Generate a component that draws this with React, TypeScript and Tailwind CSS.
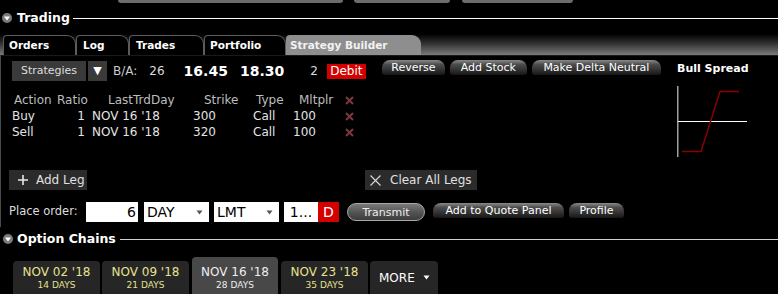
import React from "react";

const gloss =
  "flex items-center justify-center h-[15px] rounded-t-[8px] rounded-b-[3px] bg-[linear-gradient(180deg,#8a8a8a_0%,#4c4c4c_30%,#2e2e2e_70%,#161616_100%)] text-[11px] leading-none text-white";

function SectionIcon() {
  return (
    <div className="w-[10px] h-[10px] rounded-full bg-[#7a7a7a] flex items-center justify-center">
      <svg width="6" height="5" viewBox="0 0 6 5">
        <path d="M0 0.5 L6 0.5 L3 4.5 Z" fill="#fff" />
      </svg>
    </div>
  );
}

function XMark() {
  return (
    <svg width="9" height="9" viewBox="0 0 9 9">
      <path d="M1 1 L8 8 M8 1 L1 8" stroke="#7e3a3a" strokeWidth="2" />
    </svg>
  );
}

function Caret() {
  return (
    <svg width="7" height="5" viewBox="0 0 7 5">
      <path d="M0.5 0.5 L6.5 0.5 L3.5 4.5 Z" fill="#555" />
    </svg>
  );
}

const tabs = [
  { label: "Orders", w: "w-[73px]", ml: "ml-[3px]", pl: "pl-[5px]" },
  { label: "Log", w: "w-[53px]", ml: "ml-0", pl: "pl-[6px]" },
  { label: "Trades", w: "w-[75px]", ml: "ml-0", pl: "pl-[6px]" },
  { label: "Portfolio", w: "w-[82px]", ml: "ml-0", pl: "pl-[5px]" },
];

const legs = [
  { action: "Buy", strike: "300" },
  { action: "Sell", strike: "320" },
];

const dates = [
  { d: "NOV 02 '18", n: "14 DAYS", w: "w-[87px]", ml: "ml-[13px]", sel: false },
  { d: "NOV 09 '18", n: "21 DAYS", w: "w-[87px]", ml: "ml-[2px]", sel: false },
  { d: "NOV 16 '18", n: "28 DAYS", w: "w-[86px]", ml: "ml-[3px]", sel: true },
  { d: "NOV 23 '18", n: "35 DAYS", w: "w-[87px]", ml: "ml-[3px]", sel: false },
];

export default function App() {
  return (
    <div className="w-[778px] h-[294px] bg-black overflow-hidden font-['DejaVu_Sans',sans-serif] text-[#dddddd]">
      {/* top bars (cut-off buttons) */}
      <div className="flex h-[3px]">
        <div className="ml-[118px] w-[225px] bg-[#6c6c6c] rounded-b-[3px]" />
        <div className="ml-[11px] w-[96px] bg-[#6c6c6c] rounded-b-[3px]" />
        <div className="ml-[12px] w-[111px] bg-[#6c6c6c] rounded-b-[3px]" />
      </div>

      {/* Trading header */}
      <div className="mt-[5px] h-[20px] flex items-center">
        <div className="ml-[2px]">
          <SectionIcon />
        </div>
        <div className="ml-[5px] text-[12.5px] font-bold text-white leading-none">Trading</div>
        <div className="ml-[3px] flex-1 h-px bg-white" />
      </div>

      {/* tab strip */}
      <div className="h-[27px] flex items-end bg-[linear-gradient(180deg,#000_0%,#000_22%,#2e2e2e_55%,#7a7a7a_100%)]">
        {tabs.map((t) => (
          <div
            key={t.label}
            className={`${t.w} ${t.ml} ${t.pl} h-[20px] bg-black border-t border-l border-r border-[#5c5c5c] rounded-tl-[4px] rounded-tr-[9px] flex items-center text-[10.5px] font-bold text-white leading-none`}
          >
            {t.label}
          </div>
        ))}
        <div className="w-[135px] pl-[4px] h-[20px] bg-[#8e8e8e] rounded-tl-[4px] rounded-tr-[9px] flex items-center text-[10.5px] font-bold text-[#f2f2f2] leading-none">
          Strategy Builder
        </div>
      </div>

      {/* strategy panel */}
      <div className="flex h-[172px] border-l border-[#4a4a4a] border-t border-t-[#1a1a1a]">
        <div className="w-[676px] flex flex-col">
          {/* row 1 */}
          <div className="mt-[5px] h-[20px] flex items-center">
            <div className="ml-[11px] w-[74px] h-[20px] bg-[#3a3a3a] flex items-center justify-center text-[11px] text-[#dddddd]">
              Strategies
            </div>
            <div className="ml-[2px] w-[19px] h-[20px] bg-[#3a3a3a] flex items-center justify-center text-[11px] text-white">
              ▼
            </div>
            <div className="ml-[6px] text-[12px] text-[#cccccc]">B/A:</div>
            <div className="ml-[12px] text-[12px] text-[#dddddd]">26</div>
            <div className="ml-[19px] text-[14px] font-bold text-white">16.45</div>
            <div className="ml-[12px] text-[14px] font-bold text-white">18.30</div>
            <div className="ml-[26px] text-[12px] text-[#dddddd]">2</div>
            <div className="ml-[9px] w-[39px] h-[15px] bg-[#d40000] flex items-center justify-center text-[12px] text-white leading-none">
              Debit
            </div>
            <div className={`${gloss} ml-[16px] w-[63px] self-start mt-[-1px]`}>Reverse</div>
            <div className={`${gloss} ml-[5px] w-[77px] self-start mt-[-1px]`}>Add Stock</div>
            <div className={`${gloss} ml-[5px] w-[129px] self-start mt-[-1px]`}>Make Delta Neutral</div>
          </div>

          {/* legs table */}
          <div className="mt-[11px] flex flex-col text-[12px] leading-[16px]">
            <div className="flex h-[16px] text-[#bdbdbd]">
              <div className="ml-[11px] w-[43px] pl-[2px]">Action</div>
              <div className="w-[35px] pl-[2px]">Ratio</div>
              <div className="w-[100px] pl-[18px]">LastTrdDay</div>
              <div className="w-[60px] pl-[14px]">Strike</div>
              <div className="w-[40px] pl-[6px]">Type</div>
              <div className="w-[50px] pl-[9px]">Mltplr</div>
              <div className="w-[20px] pl-[5px] flex items-center">
                <XMark />
              </div>
            </div>
            {legs.map((l) => (
              <div key={l.action} className="flex h-[16px] text-[#e4e4e4]">
                <div className="ml-[11px] w-[43px]">{l.action}</div>
                <div className="w-[35px] pr-[5px] text-right">1</div>
                <div className="w-[100px] pl-[2px]">NOV 16 '18</div>
                <div className="w-[60px] pl-[3px]">{l.strike}</div>
                <div className="w-[40px] pl-[3px]">Call</div>
                <div className="w-[50px] pl-[3px]">100</div>
                <div className="w-[20px] pl-[5px] flex items-center">
                  <XMark />
                </div>
              </div>
            ))}
          </div>

          {/* add leg / clear */}
          <div className="mt-[30px] h-[20px] flex items-center">
            <div className="ml-[8px] w-[78px] h-[20px] bg-[#2b2b2b] flex items-center text-[12px] text-[#e0e0e0]">
              <svg className="ml-[9px]" width="10" height="10" viewBox="0 0 10 10">
                <path d="M5 0 V10 M0 5 H10" stroke="#e8e8e8" strokeWidth="1.6" />
              </svg>
              <span className="ml-[8px]">Add Leg</span>
            </div>
            <div className="ml-[278px] w-[112px] h-[20px] bg-[#2b2b2b] flex items-center text-[12px] text-[#e0e0e0]">
              <svg className="ml-[5px]" width="11" height="11" viewBox="0 0 11 11">
                <path d="M0.5 0.5 L10.5 10.5 M10.5 0.5 L0.5 10.5" stroke="#d8d8d8" strokeWidth="1.1" />
              </svg>
              <span className="ml-[9px]">Clear All Legs</span>
            </div>
          </div>

          {/* place order */}
          <div className="mt-[12px] h-[20px] flex items-center">
            <div className="ml-[8px] w-[77px] text-[11.5px] text-[#dddddd]">Place order:</div>
            <div className="w-[52px] h-[20px] bg-white text-black text-[14px] flex items-center justify-end pr-[2px]">6</div>
            <div className="ml-[6px] w-[65px] h-[20px] bg-white text-black text-[14px] flex items-center justify-between pl-[3px] pr-[6px]">
              <span>DAY</span>
              <Caret />
            </div>
            <div className="ml-[5px] w-[65px] h-[20px] bg-white text-black text-[14px] flex items-center justify-between pl-[3px] pr-[6px]">
              <span>LMT</span>
              <Caret />
            </div>
            <div className="ml-[5px] w-[34px] h-[20px] bg-white text-black text-[14px] flex items-center justify-center">1...</div>
            <div className="w-[21px] h-[20px] bg-[#d40000] text-white text-[14px] flex items-center justify-center">D</div>
            <div className="ml-[8px] w-[78px] h-[18px] rounded-full border border-[#a8a8a8] bg-[linear-gradient(180deg,#7a7a7a_0%,#555_50%,#3c3c3c_100%)] flex items-center justify-center text-[11px] text-[#eeeeee] leading-none">
              Transmit
            </div>
            <div className={`${gloss} ml-[8px] w-[131px] self-start mt-[1px]`}>Add to Quote Panel</div>
            <div className={`${gloss} ml-[5px] w-[55px] self-start mt-[1px]`}>Profile</div>
          </div>
        </div>

        {/* right: strategy picture */}
        <div className="flex flex-col pt-[5px]">
          <div className="h-[15px] leading-[15px] text-[11px] font-bold text-white">Bull Spread</div>
          <svg className="mt-[10px]" width="75" height="72" viewBox="0 0 75 72">
            <line x1="0.75" y1="0" x2="0.75" y2="71" stroke="#a0a0a0" strokeWidth="1.5" />
            <line x1="1" y1="35.5" x2="70" y2="35.5" stroke="#ffffff" strokeWidth="1" />
            <polyline points="5,65.5 24,65.5 43,5.5 62,5.5" fill="none" stroke="#8b0000" strokeWidth="1.5" />
          </svg>
        </div>
      </div>

      {/* Option Chains header */}
      <div className="mt-[4px] h-[16px] flex items-center">
        <div className="ml-[3px]">
          <SectionIcon />
        </div>
        <div className="ml-[4px] text-[12.5px] font-bold text-white leading-none">Option Chains</div>
        <div className="ml-[4px] flex-1 h-px bg-[#d0d0d0]" />
      </div>

      {/* expiry tabs */}
      <div className="mt-[10px] h-[37px] flex items-end">
        {dates.map((d) => (
          <div
            key={d.d}
            className={`${d.w} ${d.ml} ${d.sel ? "h-[37px] pt-[8px] bg-[#484848] text-[#eeeeee]" : "h-[33px] pt-[4px] bg-[#262626] text-[#e6e28f]"} rounded-t-[4px] flex flex-col items-center`}
          >
            <div className="text-[12px] leading-[15px]">{d.d}</div>
            <div className="text-[9px] leading-[11px]">{d.n}</div>
          </div>
        ))}
        <div className="ml-[2px] w-[68px] h-[33px] bg-[#262626] rounded-t-[4px] flex items-center pl-[9px] text-[12px] text-white">
          <span>MORE</span>
          <svg className="ml-[8px]" width="7" height="5" viewBox="0 0 7 5">
            <path d="M0.5 0.5 L6.5 0.5 L3.5 4.5 Z" fill="#fff" />
          </svg>
        </div>
      </div>
    </div>
  );
}
